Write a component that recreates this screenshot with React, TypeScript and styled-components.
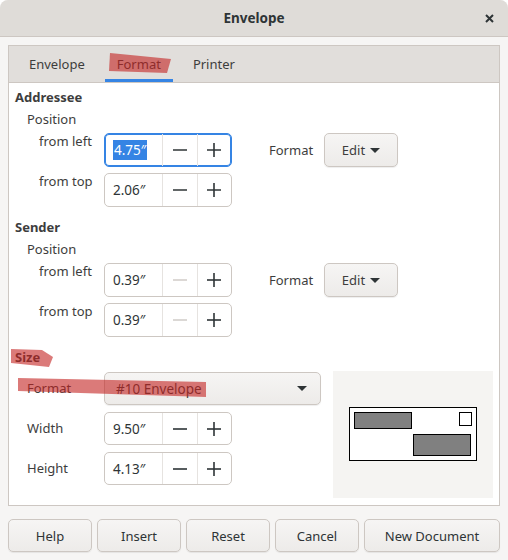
import React from "react";
import styled, { createGlobalStyle } from "styled-components";

const GlobalStyle = createGlobalStyle`
  html, body {
    margin: 0;
    padding: 0;
    background: #ffffff;
  }
  * { box-sizing: border-box; }
`;

const FONT = `"Noto Sans", "DejaVu Sans", sans-serif`;

const Window = styled.div`
  position: relative;
  width: 508px;
  height: 560px;
  background: #f6f5f4;
  display: flex;
  flex-direction: column;
  font-family: ${FONT};
  font-size: 13px;
  color: #3d3d3d;
  border-radius: 8px 8px 0 0;
  overflow: hidden;
`;

const TitleBar = styled.header`
  height: 37px;
  flex: none;
  display: grid;
  grid-template-columns: 1fr auto 1fr;
  align-items: center;
  background: #dfdcd8;
  border-bottom: 1px solid #cdc7c2;
  font-weight: bold;
  color: #2e3436;
`;

const Title = styled.div`
  grid-column: 2;
  font-size: 13.5px;
`;

const CloseButton = styled.div`
  justify-self: end;
  margin-right: 14px;
  display: flex;
  align-items: center;
`;

const Body = styled.div`
  flex: 1;
  padding: 8px 8px 9px;
  display: flex;
  flex-direction: column;
`;

const Notebook = styled.div`
  height: 461px;
  border: 1px solid #cdc7c2;
  display: flex;
  flex-direction: column;
`;

const TabBar = styled.div`
  height: 37px;
  flex: none;
  display: flex;
  gap: 8px;
  padding-left: 8px;
  background: #e1dedb;
  border-bottom: 1px solid #cdc7c2;
`;

const Tab = styled.div<{ $active?: boolean }>`
  padding: 0 12px;
  display: flex;
  align-items: center;
  padding-top: 2px;
  border-bottom: 3px solid ${(p) => (p.$active ? "#3584e4" : "transparent")};
  color: #3d3d3d;
`;

const Content = styled.div`
  flex: 1;
  background: #ffffff;
  padding: 6px 0 6px 6px;
  display: flex;
  flex-direction: column;
`;

const SectionTitle = styled.div<{ $top?: number }>`
  font-weight: bold;
  line-height: 17px;
  margin-top: ${(p) => p.$top ?? 0}px;
`;

const SubTitle = styled.div`
  line-height: 17px;
  padding-left: 12px;
  margin-top: 5px;
`;

const FieldRow = styled.div<{ $top: number; $indent: number; $align?: string }>`
  display: flex;
  align-items: ${(p) => p.$align ?? "flex-start"};
  margin-top: ${(p) => p.$top}px;
  padding-left: ${(p) => p.$indent}px;
`;

const FieldLabel = styled.div<{ $width: number }>`
  width: ${(p) => p.$width}px;
  line-height: 17px;
  flex: none;
`;

const SpinBox = styled.div<{ $focused?: boolean; $height: number }>`
  width: 128px;
  height: ${(p) => p.$height}px;
  flex: none;
  display: flex;
  background: #ffffff;
  border: 1px solid ${(p) => (p.$focused ? "#3584e4" : "#cdc7c2")};
  box-shadow: ${(p) => (p.$focused ? "inset 0 0 0 1px #3584e4" : "none")};
  border-radius: 5px;
`;

const Entry = styled.div`
  width: 57px;
  display: flex;
  align-items: center;
  padding-left: 8px;
  font-size: 13.5px;
  color: #2e3436;
`;

const Selected = styled.span`
  background: #3584e4;
  color: #ffffff;
  padding: 1px 1px;
`;

const StepButton = styled.div`
  flex: 1;
  display: flex;
  align-items: center;
  justify-content: center;
  border-left: 1px solid #e6e3e0;
`;

const FormatLabel = styled.div`
  width: 55px;
  margin-left: 37px;
  line-height: 34px;
`;

const MenuButton = styled.div`
  width: 74px;
  height: 34px;
  display: flex;
  align-items: center;
  justify-content: center;
  gap: 5px;
  border: 1px solid #cdc7c2;
  border-radius: 5px;
  background: linear-gradient(#f6f5f4, #edebe9);
  box-shadow: 0 1px 1px rgba(0, 0, 0, 0.07);
`;

const SizeArea = styled.div`
  display: flex;
  align-items: flex-start;
  margin-top: 5px;
  flex: 1;
`;

const SizeFields = styled.div`
  display: flex;
  flex-direction: column;
`;

const Combo = styled.div`
  width: 217px;
  height: 33px;
  margin-top: 1px;
  display: flex;
  align-items: center;
  justify-content: space-between;
  padding: 0 13px 0 11px;
  border: 1px solid #cdc7c2;
  border-radius: 5px;
  background: linear-gradient(#f6f5f4, #edebe9);
  box-shadow: 0 1px 1px rgba(0, 0, 0, 0.07);
  font-size: 13.5px;
`;

const Preview = styled.div`
  width: 160px;
  height: 127px;
  margin-left: 12px;
  background: #f5f4f2;
  display: flex;
  align-items: center;
  justify-content: center;
`;

const ButtonBar = styled.div`
  display: flex;
  gap: 5px;
  margin-top: 13px;
`;

const DialogButton = styled.div<{ $wide?: boolean }>`
  height: 33px;
  ${(p) => (p.$wide ? "flex: 1;" : "width: 84px;")}
  display: flex;
  align-items: center;
  justify-content: center;
  border: 1px solid #cdc7c2;
  border-radius: 5px;
  background: linear-gradient(#f6f5f4, #edebe9);
  box-shadow: 0 1px 1px rgba(0, 0, 0, 0.07);
  color: #2e3436;
`;

const Marks = styled.svg`
  position: absolute;
  left: 0;
  top: 0;
  pointer-events: none;
`;

const Minus = ({ disabled }: { disabled?: boolean }) => (
  <svg width="14" height="14" viewBox="0 0 14 14">
    <line x1="0" y1="7" x2="14" y2="7" stroke={disabled ? "#d3cfcb" : "#2e3436"} strokeWidth="1.6" />
  </svg>
);

const Plus = () => (
  <svg width="14" height="14" viewBox="0 0 14 14">
    <line x1="0" y1="7" x2="14" y2="7" stroke="#2e3436" strokeWidth="1.6" />
    <line x1="7" y1="0" x2="7" y2="14" stroke="#2e3436" strokeWidth="1.6" />
  </svg>
);

const Arrow = () => (
  <svg width="10" height="5" viewBox="0 0 10 5">
    <polygon points="0,0 10,0 5,5" fill="#2e3436" />
  </svg>
);

type SpinProps = { value: string; focused?: boolean; minusOff?: boolean; height?: number };

const Spin = ({ value, focused, minusOff, height = 34 }: SpinProps) => (
  <SpinBox $focused={focused} $height={height}>
    <Entry>{focused ? <Selected>{value}</Selected> : value}</Entry>
    <StepButton>
      <Minus disabled={minusOff} />
    </StepButton>
    <StepButton>
      <Plus />
    </StepButton>
  </SpinBox>
);

export default function App() {
  return (
    <Window>
      <GlobalStyle />
      <TitleBar>
        <Title>Envelope</Title>
        <CloseButton>
          <svg width="9" height="9" viewBox="0 0 9 9">
            <path d="M1 1 L8 8 M8 1 L1 8" stroke="#2e3436" strokeWidth="2" />
          </svg>
        </CloseButton>
      </TitleBar>
      <Body>
        <Notebook>
          <TabBar>
            <Tab>Envelope</Tab>
            <Tab $active>Format</Tab>
            <Tab>Printer</Tab>
          </TabBar>
          <Content>
            <SectionTitle>Addressee</SectionTitle>
            <SubTitle>Position</SubTitle>
            <FieldRow $top={5} $indent={24}>
              <FieldLabel $width={65}>from left</FieldLabel>
              <Spin value="4.75″" focused />
              <FormatLabel>Format</FormatLabel>
              <MenuButton>
                Edit <Arrow />
              </MenuButton>
            </FieldRow>
            <FieldRow $top={6} $indent={24}>
              <FieldLabel $width={65}>from top</FieldLabel>
              <Spin value="2.06″" />
            </FieldRow>

            <SectionTitle $top={12}>Sender</SectionTitle>
            <SubTitle>Position</SubTitle>
            <FieldRow $top={5} $indent={24}>
              <FieldLabel $width={65}>from left</FieldLabel>
              <Spin value="0.39″" minusOff />
              <FormatLabel>Format</FormatLabel>
              <MenuButton>
                Edit <Arrow />
              </MenuButton>
            </FieldRow>
            <FieldRow $top={6} $indent={24}>
              <FieldLabel $width={65}>from top</FieldLabel>
              <Spin value="0.39″" minusOff />
            </FieldRow>

            <SectionTitle $top={12}>Size</SectionTitle>
            <SizeArea>
              <SizeFields>
                <FieldRow $top={0} $indent={12} $align="center">
                  <FieldLabel $width={77}>Format</FieldLabel>
                  <Combo>
                    #10 Envelope <Arrow />
                  </Combo>
                </FieldRow>
                <FieldRow $top={7} $indent={12} $align="center">
                  <FieldLabel $width={77}>Width</FieldLabel>
                  <Spin value="9.50″" height={33} />
                </FieldRow>
                <FieldRow $top={7} $indent={12} $align="center">
                  <FieldLabel $width={77}>Height</FieldLabel>
                  <Spin value="4.13″" height={33} />
                </FieldRow>
              </SizeFields>
              <Preview>
                <svg width="128" height="55" viewBox="0 0 128 55">
                  <rect x="0.5" y="0.5" width="127" height="53" fill="#ffffff" stroke="#000" />
                  <rect x="5.5" y="5.5" width="57" height="16" fill="#808080" stroke="#000" />
                  <rect x="110.5" y="5.5" width="12" height="13" fill="#ffffff" stroke="#000" />
                  <rect x="64.5" y="27.5" width="57" height="21" fill="#808080" stroke="#000" />
                </svg>
              </Preview>
            </SizeArea>
          </Content>
        </Notebook>
        <ButtonBar>
          <DialogButton>Help</DialogButton>
          <DialogButton>Insert</DialogButton>
          <DialogButton>Reset</DialogButton>
          <DialogButton>Cancel</DialogButton>
          <DialogButton $wide>New Document</DialogButton>
        </ButtonBar>
      </Body>
      <Marks width="508" height="560" viewBox="0 0 508 560">
        <g fill="rgba(195,34,32,0.6)">
          <polygon points="110,53 171,59 167,73 109,71" />
          <polygon points="11,349 42,350 53,357 49,367 11,363" />
          <polygon points="18,378 206,382 206,397 18,391" />
        </g>
      </Marks>
    </Window>
  );
}
